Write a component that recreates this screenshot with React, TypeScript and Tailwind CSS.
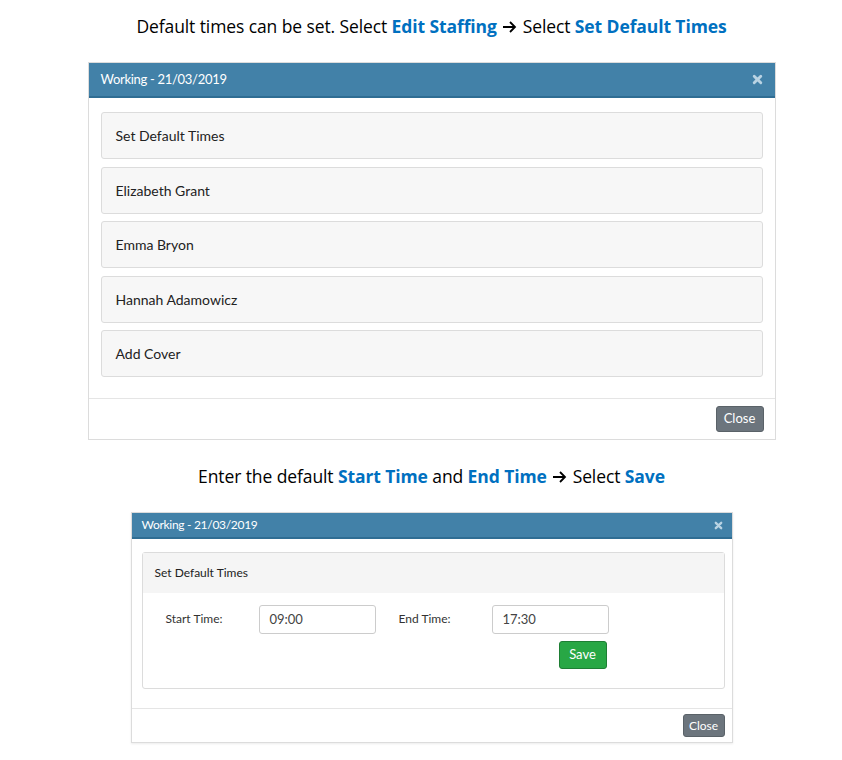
import React from 'react';

const headFont = { fontFamily: '"Open Sans", "Liberation Sans", sans-serif' };
const uiFont = { fontFamily: 'Lato, "Open Sans", sans-serif' };

const Blue = ({ children }: { children: React.ReactNode }) => (
  <span className="font-bold text-[#0070c0]">{children}</span>
);

const Arrow = () => (
  <svg width="15" height="14" viewBox="0 0 15 14" className="inline-block align-[-1px] mx-[1px]">
    <path d="M1 7 H13 M8 2 L13 7 L8 12" stroke="#000" strokeWidth="1.8" fill="none" />
  </svg>
);

const CloseX = ({ size }: { size: number }) => (
  <svg width={size} height={size} viewBox="0 0 10 10">
    <path d="M2 2 L8 8 M8 2 L2 8" stroke="#b9d3e3" strokeWidth="2.6" strokeLinecap="round" />
  </svg>
);

const items = ['Set Default Times', 'Elizabeth Grant', 'Emma Bryon', 'Hannah Adamowicz', 'Add Cover'];

export default function App() {
  return (
    <div className="w-[842px] h-[760px] bg-white flex flex-col items-center pl-[21px] text-[#222]">
      {/* Step 1 */}
      <p className="mt-[13px] text-[17.5px] leading-[26px] text-black tracking-[-0.1px]" style={headFont}>
        Default times can be set. Select <Blue>Edit Staffing</Blue> <Arrow /> Select <Blue>Set Default Times</Blue>
      </p>

      <div className="mt-[23px] w-[688px] border border-[#dcdcdc] bg-white" style={uiFont}>
        <div className="h-[35px] bg-[#4281a8] border-b-2 border-[#2f6d93] flex items-center justify-between px-[12px]">
          <span className="text-white text-[13px] tracking-[-0.3px]">Working - 21/03/2019</span>
          <CloseX size={11} />
        </div>
        <div className="px-[12px] pt-[14px] pb-[21px] flex flex-col gap-[7.5px]">
          {items.map(it => (
            <div
              key={it}
              className="h-[47px] bg-[#f7f7f7] border border-[#dcdcdc] rounded-[3px] flex items-center px-[14px] text-[14px] text-[#222]"
            >
              {it}
            </div>
          ))}
        </div>
        <div className="border-t border-[#e5e5e5] h-[41px] flex items-center justify-end px-[11px]">
          <button className="h-[26px] w-[48px] bg-[#6c757d] border border-[#5a6268] rounded-[3px] text-white text-[13px]">
            Close
          </button>
        </div>
      </div>

      {/* Step 2 */}
      <p className="mt-[23px] text-[17.5px] leading-[26px] text-black tracking-[-0.1px]" style={headFont}>
        Enter the default <Blue>Start Time</Blue> and <Blue>End Time</Blue> <Arrow /> Select <Blue>Save</Blue>
      </p>

      <div className="mt-[23px] w-[602px] border border-[#dcdcdc] bg-white shadow-[0_1px_2px_rgba(0,0,0,0.08)]" style={uiFont}>
        <div className="h-[26px] bg-[#4281a8] border-b-2 border-[#2f6d93] flex items-center justify-between pl-[10px] pr-[9px]">
          <span className="text-white text-[12px] tracking-[-0.3px]">Working - 21/03/2019</span>
          <CloseX size={9} />
        </div>
        <div className="pl-[10px] pr-[7px] pt-[13px] pb-[19px]">
          <div className="border border-[#dcdcdc] rounded-[3px]">
            <div className="h-[40px] bg-[#f5f5f5] flex items-center px-[12px] text-[12px] text-[#222]">
              Set Default Times
            </div>
            <div className="px-[23px] pt-[12px] pb-[19px]">
              <div className="flex items-center text-[12px] text-[#333]">
                <span className="w-[93px] -mt-[2px]">Start Time:</span>
                <div className="w-[117px] h-[29px] border border-[#ccc] rounded-[3px] flex items-center px-[10px] text-[13px] text-[#444]">
                  09:00
                </div>
                <span className="w-[116px] pl-[23px] -mt-[2px]">End Time:</span>
                <div className="w-[117px] h-[29px] border border-[#ccc] rounded-[3px] flex items-center px-[10px] text-[13px] text-[#444]">
                  17:30
                </div>
              </div>
              <div className="flex justify-start pl-[393px] mt-[7px]">
                <button className="h-[28px] w-[48px] bg-[#28a745] border border-[#1e7e34] rounded-[3px] text-white text-[13px]">
                  Save
                </button>
              </div>
            </div>
          </div>
        </div>
        <div className="border-t border-[#e5e5e5] h-[34px] flex items-center justify-end px-[7px]">
          <button className="h-[23px] w-[42px] bg-[#6c757d] border border-[#5a6268] rounded-[3px] text-white text-[12px]">
            Close
          </button>
        </div>
      </div>
    </div>
  );
}
